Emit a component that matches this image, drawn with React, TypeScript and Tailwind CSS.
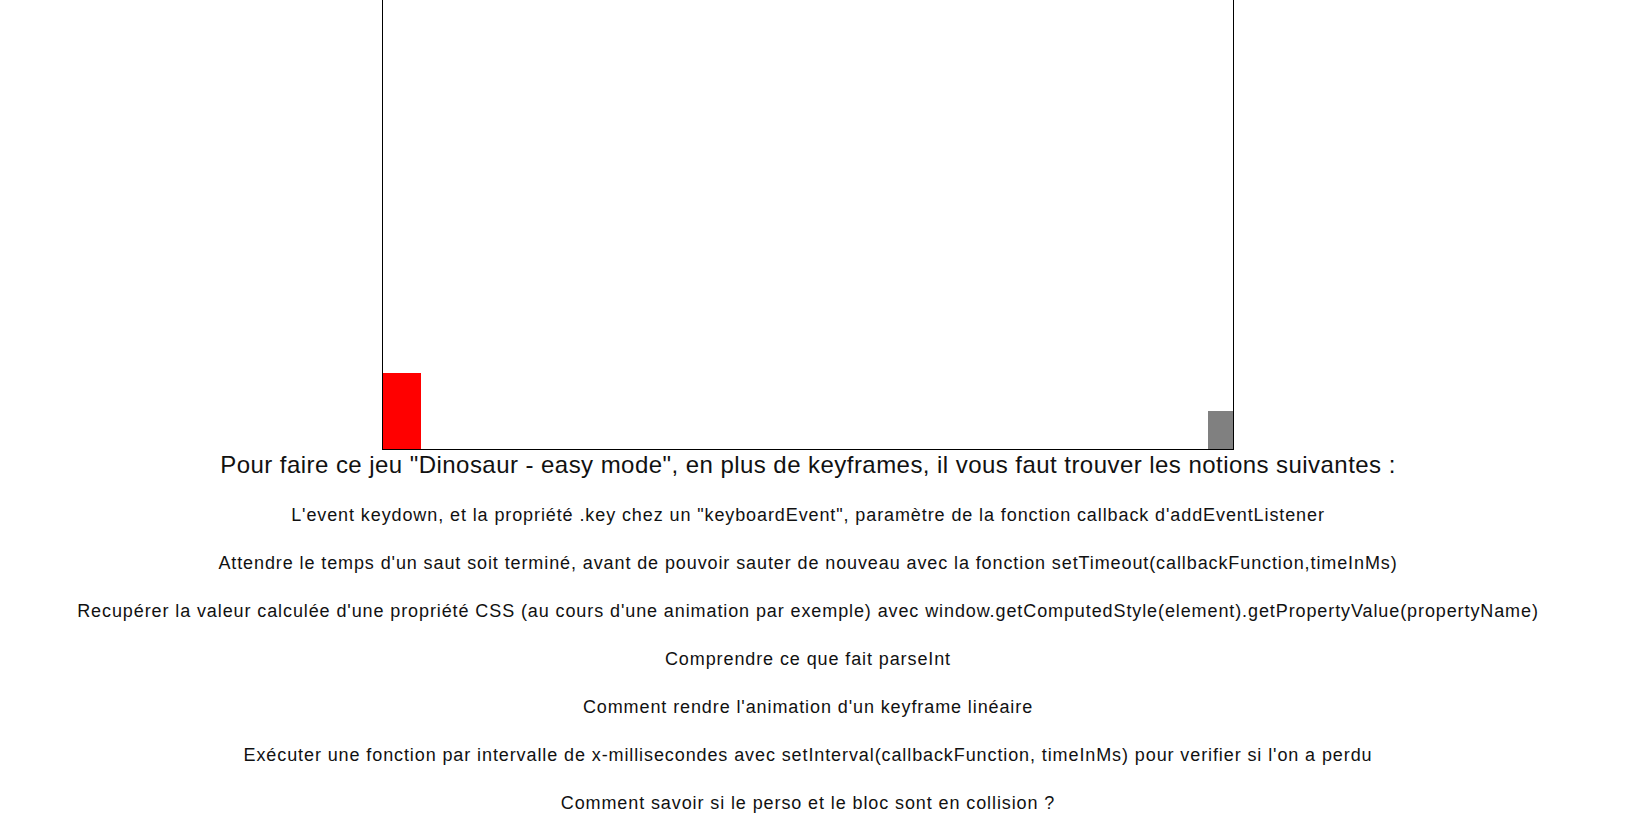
const notions = [
  "L'event keydown, et la propriété .key chez un \"keyboardEvent\", paramètre de la fonction callback d'addEventListener",
  "Attendre le temps d'un saut soit terminé, avant de pouvoir sauter de nouveau avec la fonction setTimeout(callbackFunction,timeInMs)",
  "Recupérer la valeur calculée d'une propriété CSS (au cours d'une animation par exemple) avec window.getComputedStyle(element).getPropertyValue(propertyName)",
  "Comprendre ce que fait parseInt",
  "Comment rendre l'animation d'un keyframe linéaire",
  "Exécuter une fonction par intervalle de x-millisecondes avec setInterval(callbackFunction, timeInMs) pour verifier si l'on a perdu",
  "Comment savoir si le perso et le bloc sont en collision ?",
];

export default function App() {
  return (
    <div className="h-[821px] w-[1629px] overflow-hidden bg-white font-['Liberation_Sans',Arial,sans-serif] text-[#111]">
      <div className="w-[1616px]">
        {/* game area */}
        <div className="mx-auto -mt-[50px] flex h-[500px] w-[852px] items-end justify-between border border-black">
          <div className="h-[76px] w-[38px] bg-[#ff0000]" />
          <div className="h-[38px] w-[25px] bg-[#808080]" />
        </div>

        <div className="flex flex-col items-center gap-[27px] text-center">
          <h2 className="mt-[1px] -mb-[1px] text-[24px] leading-[28px] font-normal tracking-[0.45px]">
            Pour faire ce jeu "Dinosaur - easy mode", en plus de keyframes, il vous faut trouver les notions suivantes :
          </h2>
          {notions.map((n, i) => (
            <p key={i} className="text-[18px] leading-[21px] tracking-[0.9px]">
              {n}
            </p>
          ))}
        </div>
      </div>
    </div>
  );
}
